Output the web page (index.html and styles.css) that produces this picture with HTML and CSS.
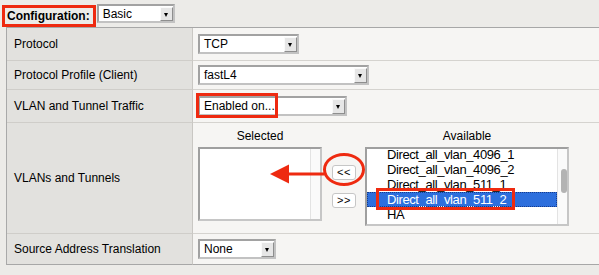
FILE: index.html
```html
<!DOCTYPE html>
<html>
<head>
<meta charset="utf-8">
<link rel="stylesheet" href="styles.css">
</head>
<body>
<div class="page">
  <div class="topbar">
    <span class="cfg-label">Configuration:</span>
    <div class="sel w-basic"><span class="sel-text">Basic</span><span class="sel-btn"></span></div>
  </div>
  <div class="props">
    <div class="lbl">Protocol</div>
    <div class="val"><div class="sel w-tcp"><span class="sel-text">TCP</span><span class="sel-btn"></span></div></div>

    <div class="lbl">Protocol Profile (Client)</div>
    <div class="val"><div class="sel w-fast"><span class="sel-text">fastL4</span><span class="sel-btn"></span></div></div>

    <div class="lbl">VLAN and Tunnel Traffic</div>
    <div class="val"><div class="sel w-enabled"><span class="sel-text">Enabled on...</span><span class="sel-btn"></span><span class="mark mark-enabled"></span></div></div>

    <div class="lbl">VLANs and Tunnels</div>
    <div class="val val-top">
      <div class="picker">
        <div class="pick-col col-selected">
          <div class="pick-title">Selected</div>
          <div class="listbox lb-selected"><div class="lb-items"></div><div class="lb-track"></div></div>
        </div>
        <div class="pick-btns">
          <div class="mv-btn mv-left">&lt;&lt;
            <svg class="callout" width="102" height="38" viewBox="0 0 102 38">
              <ellipse cx="78" cy="18.5" rx="19.5" ry="15" fill="none" stroke="#ee2a10" stroke-width="3"/>
              <line x1="20" y1="23" x2="58.5" y2="23" stroke="#ee2a10" stroke-width="3"/>
              <polygon points="4,23 23,13.5 23,32.5" fill="#ee2a10"/>
            </svg>
          </div>
          <div class="mv-btn">&gt;&gt;</div>
        </div>
        <div class="pick-col col-available">
          <div class="pick-title">Available</div>
          <div class="listbox lb-available">
            <div class="lb-items">
              <div class="lb-item">Direct_all_vlan_4096_1</div>
              <div class="lb-item">Direct_all_vlan_4096_2</div>
              <div class="lb-item">Direct_all_vlan_511_1</div>
              <div class="lb-item is-selected">Direct_all_vlan_511_2<span class="mark mark-item"></span></div>
              <div class="lb-item">HA</div>
              <div class="lb-item">http-tunnel</div>
            </div>
            <div class="lb-track"><div class="lb-thumb"></div></div>
          </div>
        </div>
      </div>
    </div>

    <div class="lbl last">Source Address Translation</div>
    <div class="val last"><div class="sel w-none"><span class="sel-text">None</span><span class="sel-btn"></span></div></div>
  </div>
</div>
</body>
</html>
```
FILE: styles.css
```css
* { box-sizing: border-box; }
html, body { margin: 0; padding: 0; overflow: hidden; }
body {
  background: #ecebe8;
  font-family: "Liberation Sans", Arial, sans-serif;
  font-size: 12px;
  color: #000;
  width: 599px;
  height: 275px;
}
.page { width: 599px; }

.topbar {
  height: 27px;
  display: flex;
  align-items: flex-start;
  padding-left: 2px;
}
.cfg-label {
  margin-top: 5px;
  height: 22px;
  border: 3px solid #ee2a10;
  padding: 0 3px 0 2px;
  font-weight: bold;
  line-height: 16px;
  display: flex;
  align-items: center;
}
.topbar .sel { margin-top: 4px; margin-left: 1px; height: 19px; }

/* select-like control */
.sel {
  position: relative;
  display: flex;
  height: 20px;
  background: #fff;
  border: 2px solid;
  border-color: #a2a2a2 #c2c2c2 #c2c2c2 #a2a2a2;
}
.sel-text {
  flex: 1;
  padding-left: 4px;
  line-height: 16px;
  white-space: nowrap;
}
.sel-btn {
  position: relative;
  width: 13px;
  margin: 1px 0 0 0;
  background: #e6e6e6;
  border: 1px solid;
  border-color: #fafafa #8e8e8e #8e8e8e #fafafa;
}
.sel-btn::after {
  content: "";
  position: absolute;
  left: 3px;
  top: 5px;
  border-top: 4px solid #000;
  border-left: 2.5px solid transparent;
  border-right: 2.5px solid transparent;
}
.w-basic { width: 78px; }
.w-tcp { width: 101px; }
.w-fast { width: 171px; }
.w-enabled { width: 149px; }
.w-none { width: 78px; }

/* annotations */
.mark {
  position: absolute;
  border: 3px solid #ee2a10;
  pointer-events: none;
}
.mark-enabled { left: -4px; top: -5px; width: 82px; height: 25px; }
.mark-item { left: 9px; top: -4px; width: 139px; height: 22px; }

/* properties grid */
.props {
  margin-left: 6px;
  width: 600px;
  display: grid;
  grid-template-columns: 186px 1fr;
  grid-template-rows: 33px 29px 33px 111px 31px;
  border-top: 1px solid #a7a7a7;
  border-left: 1px solid #a9a9a9;
}
.lbl, .val {
  display: flex;
  align-items: center;
  border-bottom: 1px solid #d5d3cf;
}
.lbl {
  background: #e2e1de;
  border-right: 1px solid #c9c7c3;
  padding-left: 7px;
  border-bottom-color: #cfcdc9;
}
.val {
  background: #f6f5f3;
  padding-left: 5px;
}
.lbl.last, .val.last { border-bottom: 1px solid #a7a7a7; }
.val-top { align-items: flex-start; padding-top: 6px; }

/* dual list picker */
.picker { display: flex; align-items: flex-start; }
.pick-col { display: flex; flex-direction: column; }
.pick-title { height: 14px; line-height: 14px; text-align: center; margin-bottom: 4px; }
.col-selected { width: 124px; }
.col-available { width: 204px; margin-left: 9px; }
.listbox {
  position: relative;
  display: flex;
  background: #fff;
  border: 2px solid;
  border-color: #9f9f9f #c6c6c6 #c6c6c6 #9f9f9f;
  overflow: hidden;
}
.lb-selected { height: 74px; }
.lb-available { height: 79px; }
.lb-items { flex: 1; margin-top: -2px; }
.lb-track {
  position: relative;
  width: 10px;
  border-left: 1px solid #e3e3e3;
  background: #fafafa;
}
.lb-thumb {
  position: absolute;
  left: 3px;
  top: 20px;
  width: 6px;
  height: 24px;
  border-radius: 3px;
  background: #b3b3b3;
}
.lb-item {
  position: relative;
  height: 15px;
  line-height: 15px;
  padding-left: 20px;
  font-size: 13px;
  letter-spacing: -0.4px;
  white-space: nowrap;
}
.lb-item.is-selected {
  background: #2d6fdd;
  color: #fff;
  outline: 1px dotted #163c8c;
  outline-offset: -1px;
}

.pick-btns {
  width: 24px;
  margin-left: 10px;
  padding-top: 36px;
  display: flex;
  flex-direction: column;
  gap: 13px;
}
.mv-btn {
  position: relative;
  height: 15px;
  background: #fff;
  border: 1px solid #c6c6c6;
  border-radius: 3px;
  font-size: 11px;
  line-height: 13px;
  text-align: center;
  letter-spacing: 0.5px;
}
.callout {
  position: absolute;
  left: -67px;
  top: -15px;
  overflow: visible;
}
```
